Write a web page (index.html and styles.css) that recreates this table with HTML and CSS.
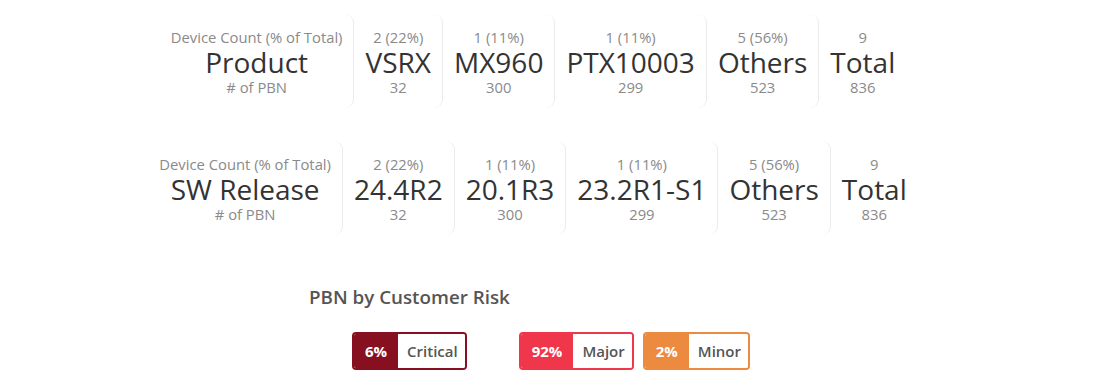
FILE: index.html
```html
<!DOCTYPE html>
<html>
<head>
<meta charset="utf-8">
<link rel="stylesheet" href="styles.css">
</head>
<body>
<div class="page">
  <div class="stats stats-product">
    <div class="cell"><div class="sub">Device Count (% of Total)</div><div class="big">Product</div><div class="sub"># of PBN</div></div>
    <div class="cell"><div class="sub">2 (22%)</div><div class="big">VSRX</div><div class="sub">32</div></div>
    <div class="cell"><div class="sub">1 (11%)</div><div class="big">MX960</div><div class="sub">300</div></div>
    <div class="cell"><div class="sub">1 (11%)</div><div class="big">PTX10003</div><div class="sub">299</div></div>
    <div class="cell"><div class="sub">5 (56%)</div><div class="big">Others</div><div class="sub">523</div></div>
    <div class="cell last"><div class="sub">9</div><div class="big">Total</div><div class="sub">836</div></div>
  </div>
  <div class="stats stats-release">
    <div class="cell"><div class="sub">Device Count (% of Total)</div><div class="big">SW Release</div><div class="sub"># of PBN</div></div>
    <div class="cell"><div class="sub">2 (22%)</div><div class="big">24.4R2</div><div class="sub">32</div></div>
    <div class="cell"><div class="sub">1 (11%)</div><div class="big">20.1R3</div><div class="sub">300</div></div>
    <div class="cell"><div class="sub">1 (11%)</div><div class="big">23.2R1-S1</div><div class="sub">299</div></div>
    <div class="cell"><div class="sub">5 (56%)</div><div class="big">Others</div><div class="sub">523</div></div>
    <div class="cell last"><div class="sub">9</div><div class="big">Total</div><div class="sub">836</div></div>
  </div>
  <div class="risk">
    <div class="risk-title">PBN by Customer Risk</div>
    <div class="badges">
      <div class="badge critical"><span class="pct">6%</span><span class="lbl">Critical</span></div>
      <div class="badge major"><span class="pct">92%</span><span class="lbl">Major</span></div>
      <div class="badge minor"><span class="pct">2%</span><span class="lbl">Minor</span></div>
    </div>
  </div>
</div>
</body>
</html>
```
FILE: styles.css
```css
html, body {
  margin: 0;
  padding: 0;
  background: #ffffff;
}
body {
  font-family: "Open Sans", "Liberation Sans", sans-serif;
  color: #333333;
}
.page {
  width: 1067px;
  padding-top: 14px;
}
.stats {
  display: flex;
  justify-content: center;
}
.stats-release {
  margin-top: 33px;
}
.cell {
  display: flex;
  flex-direction: column;
  align-items: center;
  padding: 14px 11px 12px;
  border-right: 1px solid #ebebeb;
  border-radius: 0 9px 9px 0;
  white-space: nowrap;
}
.cell.last {
  border-right: 1px solid transparent;
}
.sub {
  font-size: 14.8px;
  line-height: 18px;
  color: #8a8a8a;
}
.big {
  font-size: 28px;
  line-height: 32px;
  color: #333333;
}
.risk {
  padding-left: 309px;
  margin-top: 50px;
}
.risk-title {
  font-size: 18.8px;
  font-weight: 600;
  color: #555555;
  line-height: 24px;
}
.badges {
  display: flex;
  margin-top: 23px;
  padding-left: 43px;
}
.badge {
  display: flex;
  height: 38px;
  box-sizing: border-box;
  border: 2px solid;
  border-radius: 4px;
  overflow: hidden;
  font-size: 15px;
  font-weight: 600;
}
.badge .pct {
  display: flex;
  align-items: center;
  padding: 0 11px 0 11px;
  color: #ffffff;
  font-weight: 700;
}
.badge .lbl {
  display: flex;
  align-items: center;
  padding: 0 7px 0 9px;
  background: #ffffff;
  color: #555555;
}
.critical { border-color: #86101f; }
.critical .pct { background: #86101f; }
.major { border-color: #f0364a; margin-left: 52px; }
.major .pct { background: #f0364a; }
.minor { border-color: #ec8a3f; margin-left: 9px; }
.minor .pct { background: #ec8a3f; }
```
